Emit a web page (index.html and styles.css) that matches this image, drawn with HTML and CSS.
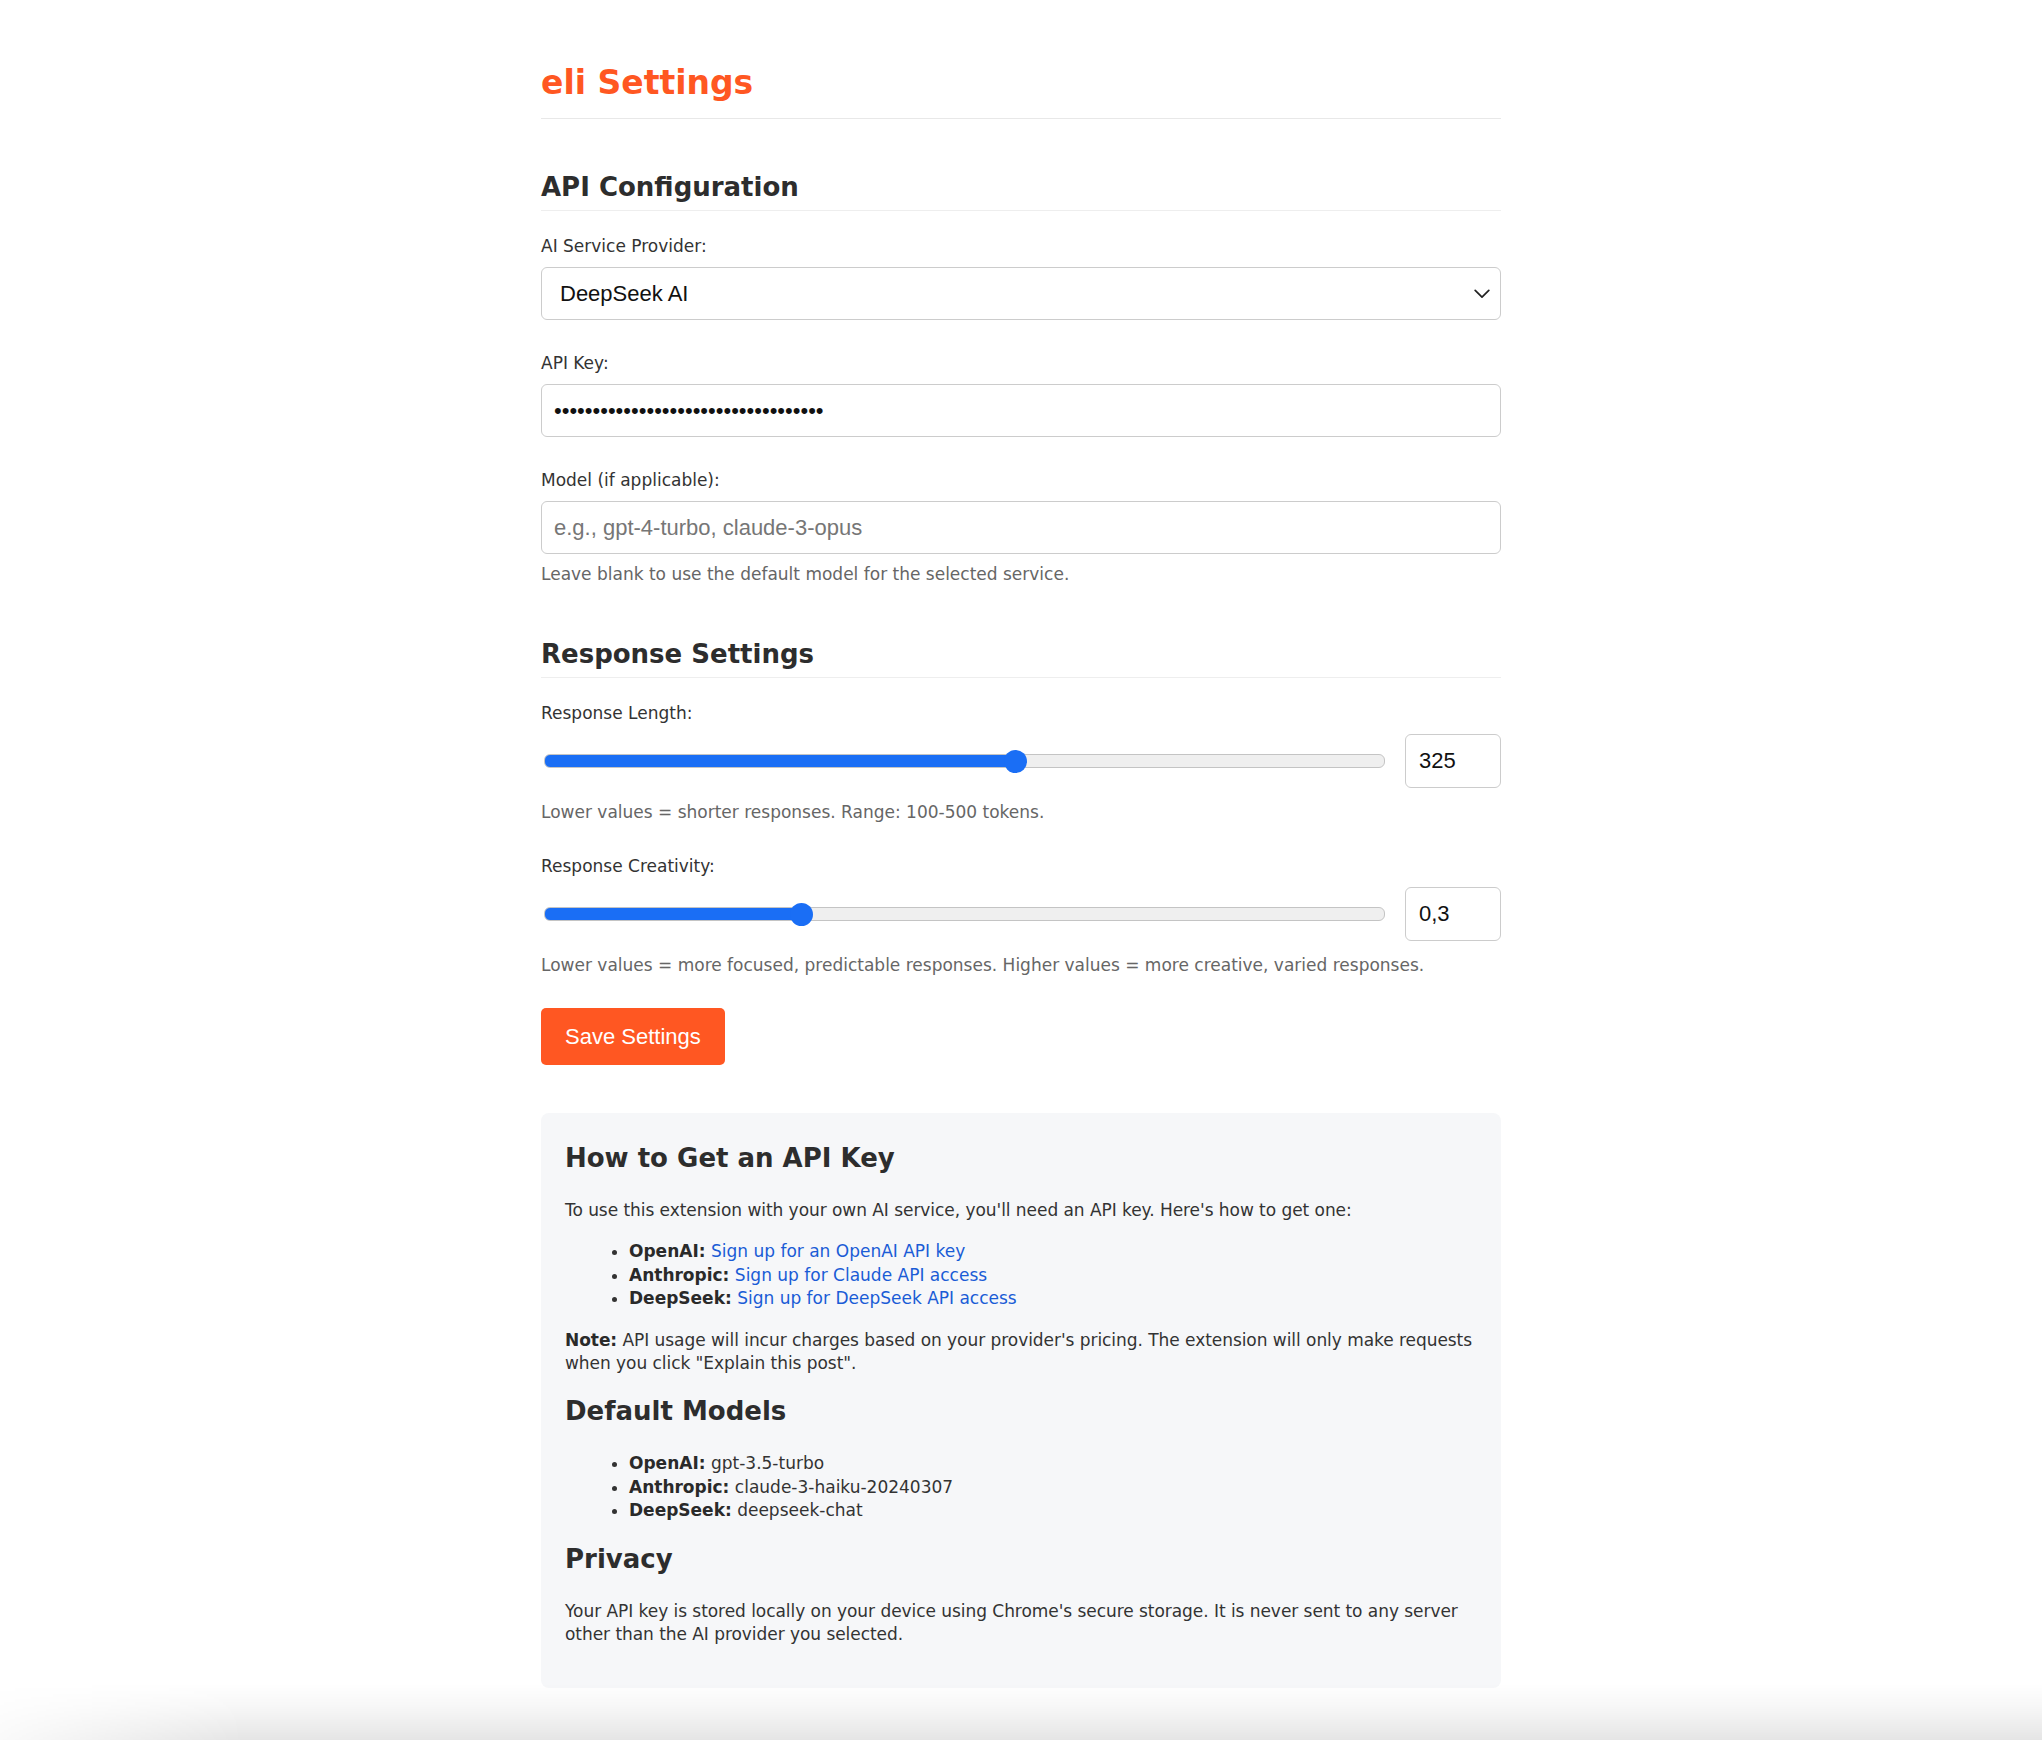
FILE: index.html
```html
<!DOCTYPE html>
<html lang="en">
<head>
<meta charset="utf-8">
<title>eli Settings</title>
<link rel="stylesheet" href="styles.css">
</head>
<body>
<div class="page">
  <header class="page-header">
    <h1 class="title">eli Settings</h1>
  </header>

  <section class="section">
    <h2 class="section-title">API Configuration</h2>
    <div class="field">
      <label class="label" for="provider">AI Service Provider:</label>
      <select id="provider" class="control select">
        <option>OpenAI</option>
        <option>Anthropic Claude</option>
        <option selected>DeepSeek AI</option>
      </select>
    </div>
    <div class="field">
      <label class="label" for="apikey">API Key:</label>
      <input id="apikey" class="control" type="password" value="sk-9f8a7b6c5d4e3f2a1b0c9d8e7f6a5b4c">
    </div>
    <div class="field">
      <label class="label" for="model">Model (if applicable):</label>
      <input id="model" class="control" type="text" placeholder="e.g., gpt-4-turbo, claude-3-opus">
      <p class="help help-tight">Leave blank to use the default model for the selected service.</p>
    </div>
  </section>

  <section class="section">
    <h2 class="section-title">Response Settings</h2>
    <div class="field">
      <label class="label" for="length">Response Length:</label>
      <div class="slider-row">
        <input id="length" class="range" type="range" min="100" max="500" step="25" value="325" style="--f:0.5625">
        <input class="num" type="text" value="325" aria-label="Response length value">
      </div>
      <p class="help">Lower values = shorter responses. Range: 100-500 tokens.</p>
    </div>
    <div class="field">
      <label class="label" for="creativity">Response Creativity:</label>
      <div class="slider-row">
        <input id="creativity" class="range" type="range" min="0" max="1" step="0.1" value="0.3" style="--f:0.3">
        <input class="num" type="text" value="0,3" aria-label="Response creativity value">
      </div>
      <p class="help">Lower values = more focused, predictable responses. Higher values = more creative, varied responses.</p>
    </div>
    <button class="save" type="button">Save Settings</button>
  </section>

  <aside class="info">
    <h3 class="info-title">How to Get an API Key</h3>
    <p>To use this extension with your own AI service, you'll need an API key. Here's how to get one:</p>
    <ul class="info-list">
      <li><strong>OpenAI:</strong> <a href="#">Sign up for an OpenAI API key</a></li>
      <li><strong>Anthropic:</strong> <a href="#">Sign up for Claude API access</a></li>
      <li><strong>DeepSeek:</strong> <a href="#">Sign up for DeepSeek API access</a></li>
    </ul>
    <p><strong>Note:</strong> API usage will incur charges based on your provider's pricing. The extension will only make requests when you click "Explain this post".</p>

    <h3 class="info-title">Default Models</h3>
    <ul class="info-list">
      <li><strong>OpenAI:</strong> gpt-3.5-turbo</li>
      <li><strong>Anthropic:</strong> claude-3-haiku-20240307</li>
      <li><strong>DeepSeek:</strong> deepseek-chat</li>
    </ul>

    <h3 class="info-title">Privacy</h3>
    <p>Your API key is stored locally on your device using Chrome's secure storage. It is never sent to any server other than the AI provider you selected.</p>
  </aside>
</div>
<div class="bottom-shade"></div>
</body>
</html>
```

FILE: styles.css
```css
html, body {
  margin: 0;
  padding: 0;
  background: #ffffff;
}

body {
  font-family: "DejaVu Sans", Verdana, sans-serif;
  font-size: 17px;
  line-height: 23.4px;
  color: #333333;
}

.page {
  width: 960px;
  margin: 0 auto;
  padding-bottom: 60px;
}

.page-header {
  padding: 63px 0 15px;
  border-bottom: 1px solid #e8e8e8;
  margin-bottom: 52px;
}

.title {
  margin: 0;
  font-size: 33px;
  line-height: 40px;
  font-weight: bold;
  color: #ff5722;
}

.section {
  margin: 0;
}

.section-title {
  margin: 0 0 24px;
  padding-bottom: 7px;
  border-bottom: 1px solid #eeeeee;
  font-size: 26px;
  line-height: 32px;
  font-weight: bold;
  color: #2d2d2d;
}

.field {
  margin-bottom: 32px;
}

.section > .field:last-child {
  margin-bottom: 53px;
}

.label {
  display: block;
  margin-bottom: 9px;
  font-size: 17px;
  line-height: 23px;
  color: #333333;
}

.control {
  display: block;
  box-sizing: border-box;
  width: 100%;
  height: 53px;
  margin: 0;
  padding: 0 12px;
  border: 1px solid #cccccc;
  border-radius: 6px;
  background: #ffffff;
  font-family: "Liberation Sans", Arial, sans-serif;
  font-size: 22px;
  color: #111111;
  outline: none;
}

.control::placeholder {
  color: #767676;
}

.select {
  -webkit-appearance: none;
  appearance: none;
  padding-left: 18px;
  background: #ffffff url("data:image/svg+xml;utf8,<svg xmlns='http://www.w3.org/2000/svg' width='16' height='10' viewBox='0 0 16 10'><path d='M1.2 1.4 L8 8.2 L14.8 1.4' fill='none' stroke='%23222222' stroke-width='1.7' stroke-linecap='round' stroke-linejoin='round'/></svg>") no-repeat right 10px center;
}

.help {
  margin: 13px 0 0;
  font-size: 17px;
  line-height: 22px;
  color: #666666;
}

.help-tight {
  margin-top: 9px;
}

.slider-row {
  display: flex;
  align-items: center;
  gap: 18px;
  height: 54px;
}

.range {
  --thumb: 23px;
  -webkit-appearance: none;
  appearance: none;
  flex: 1;
  min-width: 0;
  height: 12px;
  margin: 0 2px 0 3px;
  border: 1px solid #c4c4c4;
  border-radius: 6px;
  background: linear-gradient(to right,
    #1a6ef5 0,
    #1a6ef5 calc(var(--thumb) / 2 + var(--f) * (100% - var(--thumb))),
    #efefef calc(var(--thumb) / 2 + var(--f) * (100% - var(--thumb))),
    #efefef 100%);
  outline: none;
}

.range::-webkit-slider-thumb {
  -webkit-appearance: none;
  appearance: none;
  width: 23px;
  height: 23px;
  border: none;
  border-radius: 50%;
  background: #1a6ef5;
}

.num {
  box-sizing: border-box;
  flex: 0 0 96px;
  width: 96px;
  height: 54px;
  margin: 0;
  padding: 0 13px;
  border: 1px solid #cccccc;
  border-radius: 6px;
  background: #ffffff;
  font-family: "Liberation Sans", Arial, sans-serif;
  font-size: 22px;
  color: #111111;
  outline: none;
}

.save {
  display: block;
  height: 57px;
  padding: 0 24px;
  border: none;
  border-radius: 5px;
  background: #ff5722;
  color: #ffffff;
  font-family: "Liberation Sans", Arial, sans-serif;
  font-size: 22px;
  cursor: pointer;
  margin: 0;
}

.info {
  margin-top: 48px;
  padding: 24px 12px 24px 24px;
  border-radius: 8px;
  background: #f6f7f9;
}

.info-title {
  margin: 20px 0 25px;
  font-size: 26px;
  line-height: 32px;
  font-weight: bold;
  color: #2d2d2d;
}

.info-title:first-child {
  margin-top: 5px;
}

.info p {
  margin: 18px 0;
  letter-spacing: -0.05px;
}

.info-list {
  margin: 18px 0;
  padding-left: 64px;
}

.info strong {
  font-weight: bold;
  color: #2a2a2a;
}

.info a {
  color: #1a5cd6;
  text-decoration: none;
}

.bottom-shade {
  position: fixed;
  left: 0;
  right: 0;
  bottom: 0;
  height: 56px;
  pointer-events: none;
  background: linear-gradient(to bottom, rgba(0, 0, 0, 0) 0, rgba(0, 0, 0, 0.03) 40%, rgba(0, 0, 0, 0.1) 100%);
  -webkit-mask-image: linear-gradient(to right, rgba(0, 0, 0, 0.2) 0, #000 12%, #000 100%);
  mask-image: linear-gradient(to right, rgba(0, 0, 0, 0.2) 0, #000 12%, #000 100%);
}
```
